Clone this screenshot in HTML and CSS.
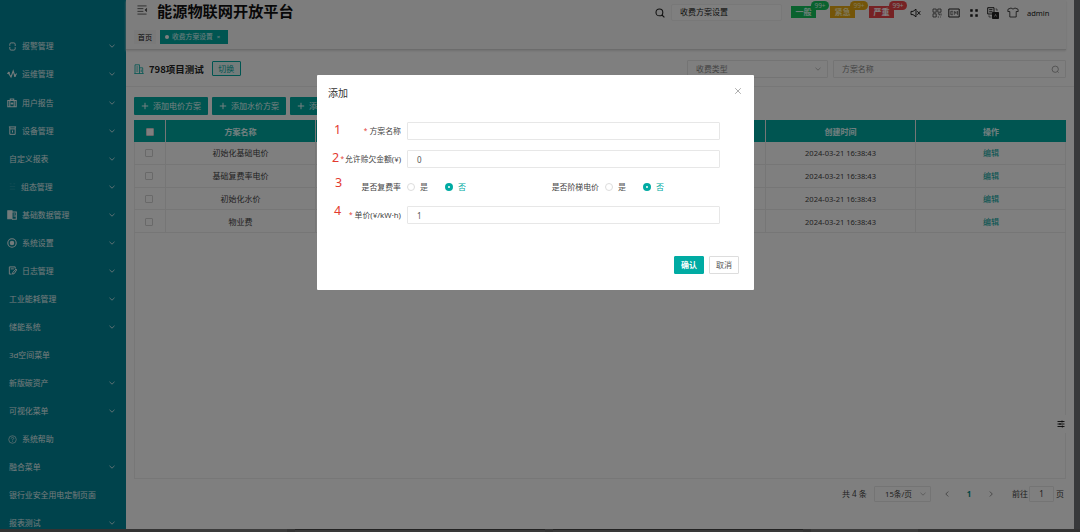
FILE: index.html
```
<!DOCTYPE html>
<html lang="zh-CN">
<head>
<meta charset="utf-8">
<title>能源物联网开放平台</title>
<link rel="stylesheet" href="styles.css">
</head>
<body>
<svg class="defs" width="0" height="0">
  <symbol id="down" viewBox="0 0 8 8"><path d="M1.5 2.8 4 5.2 6.5 2.8"/></symbol>
</svg>
<div class="app">
  <nav class="side">
    <div class="item"><svg class="ic" viewBox="0 0 10 10"><path d="M2 4.2V2.5Q2 1 3.5 1H6.5Q8 1 8 2.5V4.5M8 5.8V7.5Q8 9 6.5 9H3.5Q2 9 2 7.5V5.5"/></svg><span>报警管理</span><svg class="dn"><use href="#down"/></svg></div>
    <div class="item"><svg class="ic wide" viewBox="0 0 10 10"><path d="M.3 4.5H1.8L4 8 6.2 2 7.8 6.8 9.7 4.5"/><circle cx="1.8" cy="4" r=".6"/><circle cx="8" cy="6.8" r=".6"/></svg><span>运维管理</span><svg class="dn"><use href="#down"/></svg></div>
    <div class="item"><svg class="ic wide" viewBox="0 0 10 10"><path d="M3.3 2.3V1H6.7V2.3M.8 2.5H9.2V8.8H.8ZM2.8 2.5V8.8M7.2 2.5V8.8M3.8 5.5H6.2M5 4.3V6.7"/></svg><span>用户报告</span><svg class="dn"><use href="#down"/></svg></div>
    <div class="item"><svg class="ic" viewBox="0 0 10 10"><path d="M1 1H9M2 3.2H8V9.3H2ZM2 1V3.2M8 1V3.2M5 5V7.3"/></svg><span>设备管理</span><svg class="dn"><use href="#down"/></svg></div>
    <div class="item"><span>自定义报表</span><svg class="dn"><use href="#down"/></svg></div>
    <div class="item"><svg class="ic faint" viewBox="0 0 10 10"><path d="M2 2H4M6 2H8M2 5H8M2 8H8"/></svg><span class="near">组态管理</span><svg class="dn"><use href="#down"/></svg></div>
    <div class="item"><svg class="ic wide" viewBox="0 0 10 10"><path d="M.8.8H5V8.8H.8Z" class="fill"/><path d="M5 2H9.3V9.3H5M6.5 4H8M6.5 6H9"/></svg><span>基础数据管理</span><svg class="dn"><use href="#down"/></svg></div>
    <div class="item"><svg class="ic wide" viewBox="0 0 10 10"><circle cx="5" cy="5" r="4.2"/><circle cx="5" cy="5" r="1.7" class="fill"/></svg><span>系统设置</span><svg class="dn"><use href="#down"/></svg></div>
    <div class="item"><svg class="ic" viewBox="0 0 10 10"><path d="M8 3V1H1.5V9H4M3 3.2H6.5M9 3.3 5.5 7 5 9 7 8.4 9.5 4.5Z"/></svg><span>日志管理</span><svg class="dn"><use href="#down"/></svg></div>
    <div class="item"><span>工业能耗管理</span><svg class="dn"><use href="#down"/></svg></div>
    <div class="item"><span>储能系统</span><svg class="dn"><use href="#down"/></svg></div>
    <div class="item"><span>3d空间菜单</span></div>
    <div class="item"><span>新版碳资产</span><svg class="dn"><use href="#down"/></svg></div>
    <div class="item"><span>可视化菜单</span><svg class="dn"><use href="#down"/></svg></div>
    <div class="item"><svg class="ic thin" viewBox="0 0 10 10"><circle cx="5" cy="5" r="4.2"/><path d="M3.6 4Q3.8 2.6 5 2.6T6.4 4Q6.4 4.6 5 5.2V6M5 6.8V7.6"/></svg><span>系统帮助</span></div>
    <div class="item"><span>融合菜单</span><svg class="dn"><use href="#down"/></svg></div>
    <div class="item"><span>银行业安全用电定制页面</span></div>
    <div class="item"><span>报表测试</span><svg class="dn"><use href="#down"/></svg></div>
  </nav>
  <main class="main">
    <header class="head">
      <div class="bar">
        <svg class="fold" viewBox="0 0 12 11"><path d="M1 1H11M1 4H7.5M1 7H7.5M1 10H11"/><path class="solid" d="M11 3.8V7.2L9.2 5.5Z"/></svg>
        <h1>能源物联网开放平台</h1>
        <svg class="search" viewBox="0 0 10 10"><circle cx="4.4" cy="4.4" r="3.4"/><path d="M7 7 9.4 9.4"/></svg>
        <div class="quick">收费方案设置</div>
        <div class="alarm green">一般<b>99+</b></div>
        <div class="alarm amber">紧急<b>99+</b></div>
        <div class="alarm red">严重<b>99+</b></div>
        <div class="tools">
          <svg class="t1" viewBox="0 0 11 10"><path d="M1 3.4H3L6 1.2V8.8L3 6.6H1ZM7.3 3.2 10.3 6.8M10.3 3.2 7.3 6.8"/></svg>
          <svg class="t2" viewBox="0 0 10 10"><path d="M1 1H4.2V4.2H1ZM5.8 1H9V4.2H5.8ZM1 5.8H4.2V9H1ZM5.8 5.8H7.3V7.3M9 5.5V7.5M5.8 9H7M8.3 9H9"/></svg>
          <svg class="t3" viewBox="0 0 12 10"><path d="M.8 1H11.2V9H.8Z"/><path class="fine" d="M5 3.3H2.8V6.7H5M5 5H3.5M6.3 6.8V3.4L8 5.5V3.3M9.5 3V6.8"/></svg>
          <svg class="t4" viewBox="0 0 10 10"><path class="solid" d="M1.5 1.5H3.4V3.4H1.5ZM6.6 1.5H8.5V3.4H6.6ZM1.5 6.6H3.4V8.5H1.5ZM6.6 6.6H8.5V8.5H6.6Z"/></svg>
          <svg class="t5" viewBox="0 0 12 12"><path d="M.7.7H7V7H.7ZM2.2 2.7H5.5M2.2 4.8H5.5"/><path class="fine" d="M2 8.3V10H4.5M8.5 2H10V4"/><path class="solid" d="M5.5 5.5H11.5V11.5H5.5Z"/><path class="white" d="M7.5 9.6 8.5 7.4 9.6 9.6"/></svg>
          <svg class="t6" viewBox="0 0 12 11"><path d="M4 1 1 2.2.8 4.5H2.8V10H9.2V4.5H11.2L11 2.2 8 1Q6 3.2 4 1Z"/></svg>
        </div>
        <span class="user">admin</span>
      </div>
      <div class="tabs"><span class="tab">首页</span><span class="tab on"><i></i>收费方案设置<em>×</em></span></div>
    </header>
    <section class="project">
      <svg class="build" viewBox="0 0 10 10"><path d="M.3 9.5H9.7M1 9.5V.8H5.5V9.5M5.5 3.8H8.7V9.5M2.3 3H4.2M2.3 5H4.2M2.3 7H4.2M7.2 5.5V8"/></svg>
      <strong>798项目测试</strong><span class="switch">切换</span>
      <div class="filter type">收费类型<svg class="dn"><use href="#down"/></svg></div>
      <div class="filter name">方案名称<svg class="mag" viewBox="0 0 10 10"><circle cx="4.7" cy="4.7" r="3.5"/><path d="M7.2 7.2 8.5 8.5"/></svg></div>
    </section>
    <section class="body">
      <div class="adds"><span><svg viewBox="0 0 8 8"><path d="M4 .8V7.2M.8 4H7.2"/></svg>添加电价方案</span><span><svg viewBox="0 0 8 8"><path d="M4 .8V7.2M.8 4H7.2"/></svg>添加水价方案</span><span><svg viewBox="0 0 8 8"><path d="M4 .8V7.2M.8 4H7.2"/></svg>添加物业方案</span></div>
      <div class="table">
        <div class="row th"><div><i class="cb"></i></div><div>方案名称</div><div></div><div></div><div></div><div>创建时间</div><div>操作</div></div>
        <div class="row"><div><i class="cb"></i></div><div>初始化基础电价</div><div></div><div></div><div></div><div class="time">2024-03-21 16:38:43</div><div class="link">编辑</div></div>
        <div class="row"><div><i class="cb"></i></div><div>基础复费率电价</div><div></div><div></div><div></div><div class="time">2024-03-21 16:38:43</div><div class="link">编辑</div></div>
        <div class="row"><div><i class="cb"></i></div><div>初始化水价</div><div></div><div></div><div></div><div class="time">2024-03-21 16:38:43</div><div class="link">编辑</div></div>
        <div class="row"><div><i class="cb"></i></div><div>物业费</div><div></div><div></div><div></div><div class="time">2024-03-21 16:38:43</div><div class="link">编辑</div></div>
      </div>
      <div class="pager">
        <span class="total">共 4 条</span><span class="size">15条/页<svg class="dn"><use href="#down"/></svg></span>
        <svg class="arr" viewBox="0 0 8 8"><path d="M5.3 1.5 2.8 4 5.3 6.5"/></svg><span class="cur">1</span><svg class="arr" viewBox="0 0 8 8"><path d="M2.8 1.5 5.3 4 2.8 6.5"/></svg>
        <span class="go">前往</span><span class="num">1</span><span class="page">页</span>
      </div>
    </section>
  </main>
  <div class="edge"></div>
</div>
<div class="taskbar"><i></i><i class="w"></i><i class="w"></i><i></i></div>
<div class="setting"><svg viewBox="0 0 8 8"><path d="M.5 1.5H7.5M.5 4H7.5M.5 6.5H7.5M5 .5V2.5M3 3V5M5.3 5.5V7.5"/></svg></div>
<div class="mask">
  <div class="dialog">
    <div class="title"><span>添加</span><svg viewBox="0 0 8 8"><path d="M1.2 1.2 6.8 6.8M6.8 1.2 1.2 6.8"/></svg></div>
    <div class="field"><b class="n1">1</b><label><s>*</s> 方案名称</label><div class="input"></div></div>
    <div class="field"><b class="n2">2</b><label><s>*</s> 允许赊欠金额(¥)</label><div class="input">0</div></div>
    <div class="field"><b class="n3">3</b><label>是否复费率</label><div class="radios"><i class="r"></i><span>是</span><i class="r on"></i><span class="sel">否</span></div>
      <label class="second">是否阶梯电价</label><div class="radios"><i class="r"></i><span>是</span><i class="r on"></i><span class="sel">否</span></div></div>
    <div class="field"><b class="n4">4</b><label><s>*</s> 单价(¥/kW·h)</label><div class="input">1</div></div>
    <div class="foot"><span class="ok">确认</span><span class="cancel">取消</span></div>
  </div>
</div>
</body>
</html>
```
FILE: styles.css
```
* { box-sizing: border-box; }
body { margin: 0; width: 1080px; height: 532px; overflow: hidden; background: #fff; color: #444; font: 8px/12px "Noto Sans", "Noto Sans CJK SC", sans-serif; }
svg { fill: none; stroke: currentColor; stroke-width: 1; flex: none; }
i, em { font-style: normal; }
.defs { position: absolute; }
.solid { fill: currentColor; }
.fine { stroke-width: .6; }
.app { display: flex; height: 529px; overflow: hidden; }

.side { width: 126px; padding-top: 32.4px; background: #008799; color: #e8f6f7; flex: none; }
.item { height: 28.05px; display: flex; align-items: center; padding: 0 10px 0 8px; white-space: nowrap; font-size: 7.9px; }
.item span { padding-left: 1px; }
.ic { width: 9px; height: 9px; margin-right: 4px; stroke-width: 1.1; }
.ic.wide { width: 10px; height: 10px; margin: 0 4px 0 -1px; }
.ic .fill { fill: currentColor; }
.ic.faint { opacity: .12; }
.ic.thin { stroke-width: .7; }
.item .near { padding-left: 0; }
.dn { width: 8px; height: 8px; margin-left: auto; stroke-width: .8; }

.main { flex: 1; min-width: 0; }
.head { height: 50px; width: 940px; border-bottom: 1px solid #d8d8d8; box-shadow: 0 1px 2px #ddd; background: #fafafa; }
.bar { height: 25px; display: flex; align-items: center; color: #222; }
.fold { width: 12px; height: 10px; margin: -5px 0 0 10px; color: #555; }
h1 { margin: -5px 0 0 9px; font: bold 15.2px/20px "Noto Sans CJK SC", sans-serif; color: #111; width: 360px; white-space: nowrap; }
.search { width: 10px; height: 10px; margin: 1px 6px 0 138px; stroke-width: 1.1; }
.quick { width: 111px; height: 17px; margin-right: 9px; padding: 1px 8px; border: 1px solid #f0f0f0; border-radius: 2px; background: #fff; }
.alarm { position: relative; width: 25px; height: 12px; margin: -1px 14px 0 0; color: #fff; text-align: center; line-height: 12px; font-weight: bold; }
.alarm b { position: absolute; top: -5px; left: 20px; width: 18px; height: 9px; border-radius: 5px; font: 6.5px/9px "Noto Sans", sans-serif; }
.green, .green b { background: #14c45c; color: #dfe; }
.amber, .amber b { background: #e8aa12; color: #fff0b5; }
.red, .red b { background: #ec4548; color: #fff; }
.tools { display: flex; align-items: center; margin: 0 0 0 2px; }
.t1 { width: 11px; height: 10px; }
.t2 { width: 10px; height: 10px; margin-left: 11px; stroke-width: .7; }
.t3 { width: 12px; height: 10px; margin-left: 6px; }
.t4 { width: 10px; height: 10px; margin-left: 9px; stroke-width: .6; }
.t5 { width: 12px; height: 12px; margin-left: 8px; }
.t6 { width: 12px; height: 11px; margin-left: 8px; stroke-width: .8; }
.white { stroke: #fff; stroke-width: .5; }
.user { margin-left: 8px; font-size: 7.5px; line-height: 12px; }
.tabs { display: flex; gap: 4px; padding: 5px 0 0 8px; }
.tab { width: 22px; height: 14px; line-height: 14px; text-align: center; color: #111; background: #f4f4f4; font-size: 7.2px; }
.tab.on { display: flex; align-items: center; width: 68px; padding-left: 5px; background: #00aba3; color: #e2ffff; font-size: 6.8px; }
.tab i { width: 4px; height: 4px; border-radius: 50%; background: #fff; margin-right: 3px; }
.tab em { margin-left: 4px; font-size: 6px; }

.project { display: flex; align-items: center; height: 37px; padding: 2px 8px 0 8px; border-bottom: 1px solid #eee; }
.build { width: 10px; height: 10px; color: #00aba3; stroke-width: .8; }
.project strong { margin-left: 5px; margin-top: -1px; font-size: 9.5px; color: #222; font-family: "Noto Sans CJK SC", sans-serif; }
.switch { width: 29px; height: 15px; line-height: 13px; margin: -1px 0 0 8px; text-align: center; color: #00aba3; border: 1px solid #00aba3; border-radius: 1px; background: #e7f8f7; }
.filter { display: flex; align-items: center; height: 18px; border: 1px solid #e9e9e9; color: #888; border-radius: 1px; padding: 0 5px 0 8px; font-size: 7.9px; }
.type { width: 141px; margin-left: auto; }
.name { width: 233px; margin-left: 5px; }
.mag { width: 9px; height: 9px; margin-left: auto; stroke-width: .8; }

.body { padding: 10px 8px 0 8px; }
.adds { display: flex; gap: 4px; }
.adds span { display: flex; align-items: center; gap: 4px; padding-left: 7px; width: 74px; height: 18px; background: #00aba3; color: #e9ffff; border-radius: 1px; white-space: nowrap; }
.adds svg { width: 8px; height: 8px; }
.table { width: 932px; height: 359px; margin-top: 5px; border: 1px solid #eee; border-top: 0; }
.row { display: grid; grid-template-columns: 32px repeat(6, 150px); width: 932px; margin-left: -1px; height: 22.75px; border-bottom: 1px solid #ececec; }
.row > div { display: flex; align-items: center; justify-content: center; border-right: 1px solid #ececec; padding-top: 1px; }
.row > div:last-child { border-right: 0; }
.th { height: 22px; background: #00aba3; color: #e5ffff; font-weight: bold; border: 0; }
.cb { width: 8px; height: 8px; border: 1px solid #d2d2d2; border-radius: 1px; margin-right: 2px; }
.th .cb { background: #fff; margin-right: 0; }
.row .time { font-size: 7.5px; }
.row .link { color: #00a39c; }
.pager { display: flex; align-items: center; height: 30px; padding-left: 708px; }
.total { width: 32px; white-space: nowrap; }
.size { display: flex; align-items: center; width: 57px; height: 16px; border: 1px solid #e9e9e9; padding: 0 3px 0 10px; border-radius: 1px; font-size: 7.7px; }
.size .dn, .filter .dn { color: #aaa; }
.arr { width: 8px; height: 8px; margin: 0 12px; stroke-width: .8; color: #777; }
.cur { width: 12px; text-align: center; color: #008e87; font-weight: bold; }
.go { margin-left: 5px; width: 17px; white-space: nowrap; }
.num { width: 25px; height: 16px; border: 1px solid #e9e9e9; text-align: center; line-height: 14px; border-radius: 1px; }
.page { margin-left: 2px; }
.edge { width: 6px; background: #707276; flex: none; }
.taskbar { height: 3px; background: #666; display: flex; gap: 8px; padding-left: 180px; }
.taskbar i { width: 107px; background: #777; }
.taskbar .w { width: 250px; background: #737373; border-top: 1px solid #444; }
.setting { position: absolute; left: 1054px; top: 415px; width: 14px; height: 18px; background: #fff; color: #111; }
.setting svg { display: block; width: 8px; height: 8px; margin: 5px 3px; stroke-width: .9; }

.mask { position: fixed; inset: 0; background: rgba(0, 0, 0, .5); display: flex; justify-content: center; align-items: flex-start; padding: 75px 9px 0 0; }
.dialog { width: 437px; height: 215px; background: #fff; border-radius: 1px; color: #555; }
.title { height: 42px; display: flex; justify-content: space-between; padding: 12px 12px 0 11px; font-size: 10px; color: #333; }
.title svg { width: 8px; height: 8px; stroke-width: .8; color: #999; }
.field { display: flex; align-items: center; height: 28px; }
.field b { flex: none; font: 12.5px/14px "Noto Sans", sans-serif; color: #e33a2f; width: 7px; margin: -2px 0 0 17px; }
.field .n2 { margin-left: 15px; margin-right: 2px; }
.field .n3 { margin: -8px -1px 0 18px; }
.field .n4 { margin-top: -8px; }
.field label { display: flex; justify-content: flex-end; gap: 2px; flex: none; width: 60px; font-size: 7.9px; white-space: nowrap; color: #444; }
.field .n2 + label { font-size: 7.8px; gap: 1px; }
.field s { color: #e33a2f; text-decoration: none; font-size: 6.5px; }
.input { width: 313px; height: 18px; margin-left: 6px; padding: 3px 9px; border: 1px solid #e7e7e7; border-radius: 1px; line-height: 11px; }
.radios { display: flex; align-items: center; margin-left: 6px; }
.r { width: 8px; height: 8px; border: 1px solid #ddd; border-radius: 50%; }
.r + span { margin-left: 5px; width: 25px; }
.r.on { border: 3px solid #00aba3; }
.sel { color: #00aba3; }
.field .second { width: 96px; margin-left: 20px; }
.foot { display: flex; justify-content: flex-end; gap: 5px; padding: 27px 15px 0 0; }
.foot span { width: 30px; height: 18px; border: 1px solid #ddd; border-radius: 1px; text-align: center; line-height: 16px; }
.foot .ok { background: #00aba3; border-color: #00aba3; color: #fff; font-weight: bold; }
```
